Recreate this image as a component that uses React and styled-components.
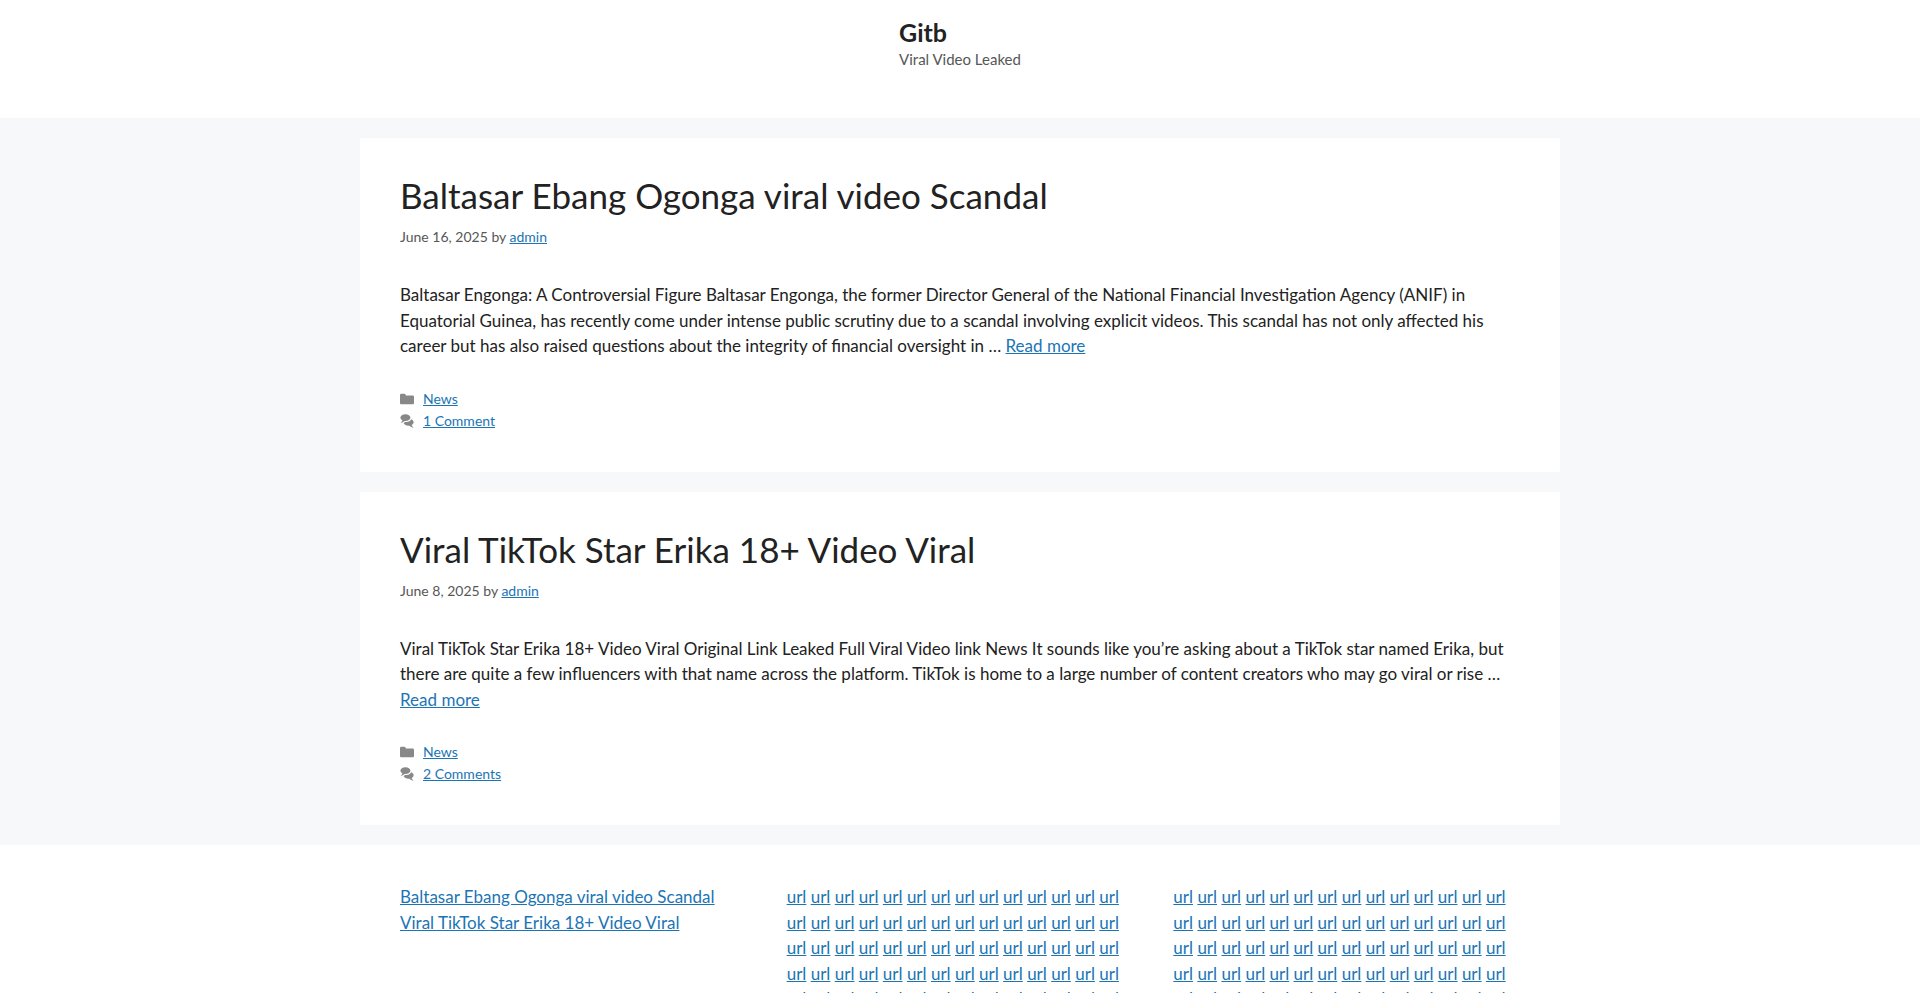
import React from 'react';
import styled, { createGlobalStyle } from 'styled-components';

const posts = [
  {
    id: 1,
    title: 'Baltasar Ebang Ogonga viral video Scandal',
    date: 'June 16, 2025',
    excerpt:
      'Baltasar Engonga: A Controversial Figure Baltasar Engonga, the former Director General of the National Financial Investigation Agency (ANIF) in Equatorial Guinea, has recently come under intense public scrutiny due to a scandal involving explicit videos. This scandal has not only affected his career but has also raised questions about the integrity of financial oversight in …',
    comments: '1 Comment',
  },
  {
    id: 2,
    title: 'Viral TikTok Star Erika 18+ Video Viral',
    date: 'June 8, 2025',
    excerpt:
      'Viral TikTok Star Erika 18+ Video Viral Original Link Leaked Full Viral Video link News It sounds like you’re asking about a TikTok star named Erika, but there are quite a few influencers with that name across the platform. TikTok is home to a large number of content creators who may go viral or rise …',
    comments: '2 Comments',
  },
];

const urls = Array.from({ length: 70 }, (_, i) => i);

function FolderIcon() {
  return (
    <Icon viewBox="0 0 512 512" aria-hidden="true">
      <path d="M0 112c0-26.51 21.49-48 48-48h110.014a48 48 0 0 1 43.592 27.907l12.349 26.791A16 16 0 0 0 228.486 128H464c26.51 0 48 21.49 48 48v224c0 26.51-21.49 48-48 48H48c-26.51 0-48-21.49-48-48V112z" />
    </Icon>
  );
}

function CommentsIcon() {
  return (
    <Icon viewBox="0 0 512 512" aria-hidden="true">
      <path d="M132.838 329.973a435.298 435.298 0 0 0 16.769-9.004c13.363-7.574 26.587-16.142 37.419-25.507 7.544.597 15.27.925 23.098.925 54.905 0 105.634-15.311 143.285-41.28 23.728-16.365 43.115-37.692 54.155-62.645 54.739 22.205 91.498 63.272 91.498 110.286 0 42.186-29.558 79.498-75.09 102.828 23.46 49.216 75.09 101.709 75.09 101.709s-115.837-38.35-154.424-78.46c-9.956 1.12-20.297 1.758-30.793 1.758-88.727 0-162.927-43.071-181.007-100.61z" />
      <path d="M383.371 132.502c0 70.603-82.961 127.787-185.216 127.787-10.496 0-20.837-.639-30.793-1.757-38.587 40.093-154.424 78.429-154.424 78.429s51.63-52.472 75.09-101.67c-45.532-23.321-75.09-60.619-75.09-102.79C12.938 61.9 95.9 4.716 198.155 4.716 300.41 4.715 383.37 61.9 383.37 132.502z" />
    </Icon>
  );
}

function Post({ post }) {
  return (
    <Article>
      <Title>
        <TitleLink href="#">{post.title}</TitleLink>
      </Title>
      <Byline>
        {post.date} by <a href="#">admin</a>
      </Byline>
      <Summary>
        {post.excerpt} <a href="#">Read more</a>
      </Summary>
      <Meta>
        <MetaRow>
          <FolderIcon />
          <a href="#">News</a>
        </MetaRow>
        <MetaRow>
          <CommentsIcon />
          <a href="#">{post.comments}</a>
        </MetaRow>
      </Meta>
    </Article>
  );
}

function UrlList() {
  return (
    <Widget>
      {urls.map((n) => (
        <React.Fragment key={n}>
          <a href="#">url</a>{' '}
        </React.Fragment>
      ))}
    </Widget>
  );
}

export default function App() {
  return (
    <>
      <GlobalStyle />
      <Header>
        <Branding>
          <SiteTitle href="#">Gitb</SiteTitle>
          <Tagline>Viral Video Leaked</Tagline>
        </Branding>
      </Header>
      <Main>
        {posts.map((post) => (
          <Post key={post.id} post={post} />
        ))}
      </Main>
      <Footer>
        <Widgets>
          <Widget>
            {posts.map((post) => (
              <div key={post.id}>
                <a href="#">{post.title}</a>
              </div>
            ))}
          </Widget>
          <UrlList />
          <UrlList />
        </Widgets>
      </Footer>
    </>
  );
}

const GlobalStyle = createGlobalStyle`
  body {
    margin: 0;
    background-color: #f7f8f9;
    color: #222222;
    font-family: Lato, sans-serif;
    font-size: 17px;
    line-height: 1.5;
  }

  a {
    color: #1b75b5;
    text-decoration: underline;
  }
`;

const Header = styled.header`
  display: flex;
  justify-content: center;
  padding: 20px 40px 48px;
  background-color: #ffffff;
`;

const Branding = styled.div`
  display: flex;
  flex-direction: column;
  gap: 4px;
`;

const SiteTitle = styled.a`
  color: #222222;
  font-size: 25px;
  font-weight: 700;
  line-height: 24px;
  text-decoration: none;
`;

const Tagline = styled.p`
  margin: 0;
  color: #575757;
  font-size: 15px;
  line-height: 22px;
`;

const Main = styled.main`
  display: flex;
  flex-direction: column;
  gap: 20px;
  max-width: 1200px;
  margin: 20px auto;
`;

const Article = styled.article`
  padding: 40px;
  background-color: #ffffff;
`;

const Title = styled.h2`
  margin: 0;
  font-size: 35px;
  font-weight: 400;
  line-height: 34px;
`;

const TitleLink = styled.a`
  color: #222222;
  text-decoration: none;
`;

const Byline = styled.div`
  margin-top: 14px;
  color: #575757;
  font-size: 14px;
  line-height: 22px;
`;

const Summary = styled.p`
  margin: 34px 0 0;
`;

const Meta = styled.footer`
  margin-top: 29px;
  color: #575757;
  font-size: 14px;
`;

const MetaRow = styled.div`
  display: flex;
  align-items: center;
  gap: 9px;
  line-height: 22px;
`;

const Icon = styled.svg`
  width: 14px;
  height: 14px;
  fill: currentColor;
  opacity: 0.7;
`;

const Footer = styled.footer`
  padding: 39px 40px;
  background-color: #ffffff;
`;

const Widgets = styled.div`
  display: grid;
  grid-template-columns: repeat(3, 1fr);
  gap: 40px;
  max-width: 1120px;
  margin: 0 auto;
`;

const Widget = styled.div`
  min-width: 0;
`;
